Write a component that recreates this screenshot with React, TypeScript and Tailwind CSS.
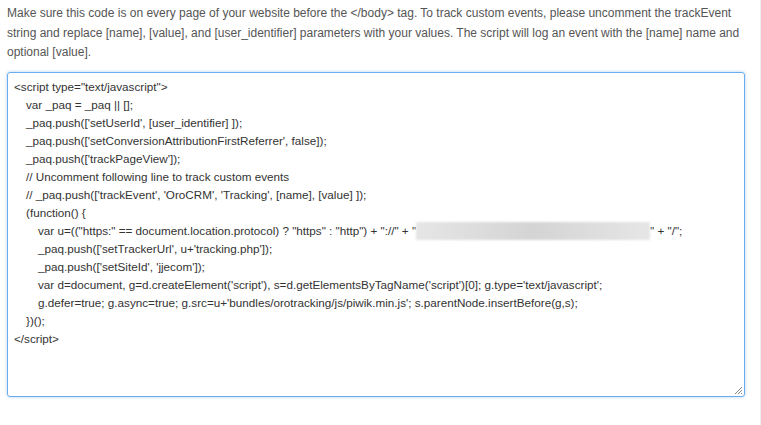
export default function App() {
  const L = (indent: number, t: React.ReactNode) => (
    <div className="whitespace-pre" style={{ paddingLeft: indent * 12 }}>{t}</div>
  );
  return (
    <div className="w-[761px] h-[425px] bg-white text-[#555] text-[12px] leading-[19.5px] border-r border-[#eee]" style={{ fontFamily: '"Liberation Sans", Arial, sans-serif' }}>
      <div className="pl-[7px] pr-[2px] pt-[4px]">
        <p>Make sure this code is on every page of your website before the &lt;/body&gt; tag. To track custom events, please uncomment the trackEvent string and replace [name], [value], and [user_identifier] parameters with your values. The script will log an event with the [name] name and optional [value].</p>
        <div className="relative mt-[9px] w-[738px] h-[325px] border border-[#6aaef0] rounded-[3px] shadow-[0_0_3px_rgba(80,150,230,0.5)] px-[6px] pt-[5px] text-[#333] text-[11.7px] leading-[18px]">
          {L(0, '<script type="text/javascript">')}
          {L(1, 'var _paq = _paq || [];')}
          {L(1, "_paq.push(['setUserId', [user_identifier] ]);")}
          {L(1, "_paq.push(['setConversionAttributionFirstReferrer', false]);")}
          {L(1, "_paq.push(['trackPageView']);")}
          {L(1, '// Uncomment following line to track custom events')}
          {L(1, "// _paq.push(['trackEvent', 'OroCRM', 'Tracking', [name], [value] ]);")}
          {L(1, '(function() {')}
          {L(2, <>var u=(("https:" == document.location.protocol) ? "https" : "http") + "://" + "<span className="inline-block align-middle w-[234px] h-[18px] bg-gradient-to-r from-[#e6e6e6] via-[#d4d4d4] to-[#e6e6e6] blur-[1px]" />" + "/";</>)}
          {L(2, "_paq.push(['setTrackerUrl', u+'tracking.php']);")}
          {L(2, "_paq.push(['setSiteId', 'jjecom']);")}
          {L(2, "var d=document, g=d.createElement('script'), s=d.getElementsByTagName('script')[0]; g.type='text/javascript';")}
          {L(2, "g.defer=true; g.async=true; g.src=u+'bundles/orotracking/js/piwik.min.js'; s.parentNode.insertBefore(g,s);")}
          {L(1, '})();')}
          {L(0, '</script>')}
          <svg className="absolute right-[1px] bottom-[1px]" width="10" height="10" viewBox="0 0 10 10">
            <path d="M9 2L2 9M9 5L5 9M9 8L8 9" stroke="#888" strokeWidth="1" />
          </svg>
        </div>
      </div>
    </div>
  );
}
